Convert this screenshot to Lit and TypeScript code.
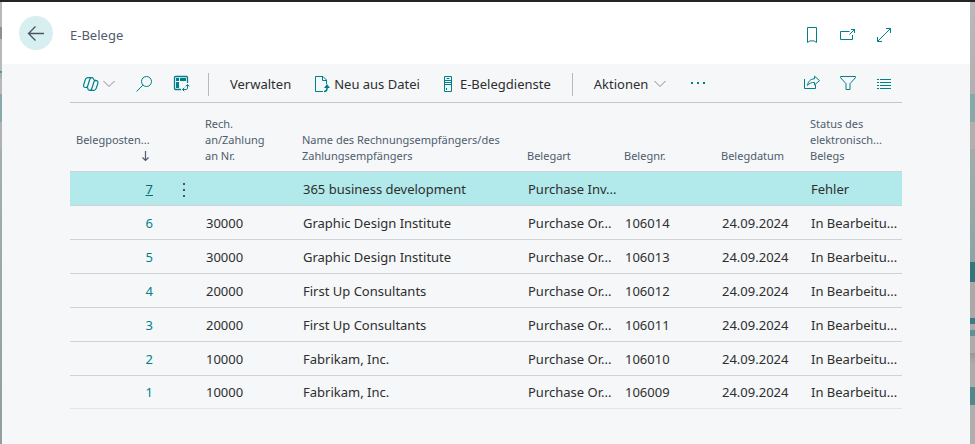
import { LitElement, html, css, svg, nothing } from "lit";
import { customElement, property } from "lit/decorators.js";

interface Entry {
  id: number;
  party: string;
  name: string;
  kind: string;
  docNo: string;
  date: string;
  status: string;
}

const ENTRIES: Entry[] = [
  { id: 7, party: "", name: "365 business development", kind: "Purchase Inv...", docNo: "", date: "", status: "Fehler" },
  { id: 6, party: "30000", name: "Graphic Design Institute", kind: "Purchase Or...", docNo: "106014", date: "24.09.2024", status: "In Bearbeitu..." },
  { id: 5, party: "30000", name: "Graphic Design Institute", kind: "Purchase Or...", docNo: "106013", date: "24.09.2024", status: "In Bearbeitu..." },
  { id: 4, party: "20000", name: "First Up Consultants", kind: "Purchase Or...", docNo: "106012", date: "24.09.2024", status: "In Bearbeitu..." },
  { id: 3, party: "20000", name: "First Up Consultants", kind: "Purchase Or...", docNo: "106011", date: "24.09.2024", status: "In Bearbeitu..." },
  { id: 2, party: "10000", name: "Fabrikam, Inc.", kind: "Purchase Or...", docNo: "106010", date: "24.09.2024", status: "In Bearbeitu..." },
  { id: 1, party: "10000", name: "Fabrikam, Inc.", kind: "Purchase Or...", docNo: "106009", date: "24.09.2024", status: "In Bearbeitu..." },
];

const ICONS = {
  back: { w: 18, h: 17, body: svg`<path d="M17 8.500H1.500M8.500 1.500l-7 7 7 7" stroke-width="1.300"/>` },
  bookmark: { w: 18, h: 18, body: svg`<path d="M4.5 1.5h9v15l-2.5-1.6h-4l-2.5 1.6z"/>` },
  popout: { w: 18, h: 18, body: svg`<path d="M10.5 5.5h-9v8h12V9M10.5 8.5l5-5M12 3.5h3.5V7"/>` },
  expand: { w: 18, h: 18, body: svg`<path d="M2.5 15.5l13-13M11 2.5h4.5V7M2.5 11v4.5H7"/>` },
  copilot: {
    w: 18, h: 16,
    body: svg`<path stroke-width="1.200" d="M5.600 1.600h4.200c1 0 1.500.6 1.800 1.600l.3 1M5.600 1.600C4.300 1.600 3.700 2.500 3.300 3.800L1.800 8.400C1.200 10.400 1.800 11.500 3.600 11.500h1.300M11.900 4.400h1.400c2.100 0 3.100 1.100 2.500 3.100l-1.500 4.600c-.5 1.500-1.100 2.300-2.400 2.300H7.800c-1.100 0-1.600-.6-1.900-1.600l-.4-1.300M9.200 1.800C8.300 2.200 7.900 3 7.500 4.200L5.700 10c-.3 1-.6 1.500-1.600 1.500M8.400 14.200c.9-.4 1.300-1.200 1.700-2.400l1.800-5.800c.3-1 .6-1.600 1.600-1.600"/>`,
  },
  chevron: { w: 12, h: 8, body: svg`<path d="M.5 1L6 6.500 11.500 1"/>` },
  search: { w: 18, h: 18, body: svg`<circle cx="11.500" cy="6.500" r="5"/><path d="M7.900 10.100l-6.400 6.400"/>` },
  analyze: {
    w: 18, h: 18,
    body: svg`<path d="M8 14.500H2.500a1 1 0 0 1-1-1v-11a1 1 0 0 1 1-1h11a1 1 0 0 1 1 1V8" stroke-width="1.300"/><path class="solid" d="M3 3h3v3H3zM7 3h6v3H7zM3 7h3v6H3z"/><path d="M9.500 14.500h3.500c1 0 1.500-.5 1.500-1.500V10M11.300 12.700L9.500 14.500l1.800 1.800M12.700 11.300l1.800-1.800 1.800 1.800"/>`,
  },
  newFile: {
    w: 16, h: 18,
    body: svg`<path d="M8 16.500H.5v-15h7.500l3.500 3.500v4M7.500 1.500V5.500h4"/><path class="solid" d="M12 9l3 4H9z"/><path d="M12 12v1c0 2.200-1 3.500-3 3.500" stroke-width="1.600"/>`,
  },
  server: { w: 8, h: 18, body: svg`<path d="M.5 1.500h7v15h-7zM2.500 3.500h3M1 5.500h6M1 7.500h6M1 9.500h6M2.500 13v2"/>` },
  share: { w: 18, h: 18, body: svg`<path d="M1.500 4v9.500h11V10M4.500 10.500C5 6.500 7.500 3.800 11.500 3.800V1.200l5 4.400-5 4.400V7.400C8.500 7.400 6 8.300 4.500 10.500z"/>` },
  filter: { w: 18, h: 18, body: svg`<path d="M1.500 1.500h15v1.200L11 8.700v5.800H7V8.700l-5.500-6z"/>` },
  list: { w: 18, h: 18, body: svg`<path d="M2 4.500h2M5 4.500h11M2 7.500h2M5 7.500h11M2 10.500h2M5 10.500h11M2 13.500h2M5 13.500h11"/>` },
  more: { w: 16, h: 6, body: svg`<path class="solid" d="M1 1h2v2H1zM7 1h2v2H7zM13 1h2v2h-2z"/>` },
  rowMenu: { w: 4, h: 16, body: svg`<path class="solid" d="M1 1h2v2H1zM1 7h2v2H1zM1 13h2v2H1z"/>` },
  sortDown: { w: 8, h: 12, body: svg`<path d="M3.500 1v9.500M.5 7.500l3 3 3-3" stroke-width="1.200"/>` },
};

@customElement("ui-icon")
export class UiIcon extends LitElement {
  @property() name: keyof typeof ICONS = "back";

  static styles = css`
    :host { display: inline-flex; flex: none; }
    .icon { display: block; fill: none; stroke: currentColor; stroke-width: 1; }
    .solid { fill: currentColor; stroke: none; }
  `;

  render() {
    const i = ICONS[this.name];
    return html`<svg class="icon" width=${i.w} height=${i.h} viewBox="0 0 ${i.w} ${i.h}" aria-hidden="true">${i.body}</svg>`;
  }
}

@customElement("app-root")
export class AppRoot extends LitElement {
  static styles = css`
    :host {
      display: grid;
      grid-template-columns: 2px minmax(0, 1fr) 5px;
      min-height: 100vh;
      box-sizing: border-box;
      border-top: 2px solid #252423;
      background: #f5f7f9;
      color: #2e2e2e;
      font-family: "Noto Sans", "Open Sans", sans-serif;
      font-size: 13px;
      line-height: 18px;
    }
    .behind-left {
      background: linear-gradient(#b8b8b8 25px, #8b9097 25px 37px, #b9b9b9 37px 69px, #5f9499 69px 71px,
        #a3b3b3 71px 76px, #b9b9b9 76px 92px, #88a9ac 92px 120px, #b0b2b2 120px 147px, #a3b0ae 147px, #929e9e);
    }
    .behind-right {
      background: linear-gradient(#bababa, #b0b0b0 92px, #86a9ab 92px 120px, #b1b0af 120px 147px,
        #a0aeab 147px, #88a5a4 260px, #30777d 260px 280px, #a9a9a9 280px 316px, #367e84 316px 322px,
        #acacac 322px 328px, #5f9296 328px 334px, #acacac 334px 351px, #989898 351px, #acacac 362px 385px,
        #50898b 385px 403px, #aeaeae 403px);
    }
    button {
      display: inline-flex;
      align-items: center;
      margin: 0;
      padding: 0;
      border: 0;
      background: none;
      color: inherit;
      font: inherit;
      text-align: left;
      cursor: pointer;
    }
    .head {
      display: flex;
      align-items: center;
      height: 62px;
      padding: 0 77px 0 17px;
      background: #fff;
    }
    .back {
      justify-content: center;
      width: 34px;
      height: 34px;
      border-radius: 50%;
      background: #d7eff1;
      color: #4c535c;
    }
    .title {
      flex: 1;
      margin: 0;
      padding: 4px 0 0 17px;
      color: #505c6d;
      font-size: 13px;
      font-weight: 400;
    }
    .group { display: flex; align-items: center; gap: 18px; color: #008089; }
    .head .group { padding-top: 4px; }
    .body { padding: 0 68px 24px; }
    .toolbar {
      display: flex;
      align-items: center;
      height: 39px;
      padding: 2px 9px 0 12px;
      box-sizing: border-box;
      border-bottom: 1px solid #c4c6c9;
    }
    .teal { color: #008089; }
    .grey { color: #848b95; }
    .labelled { gap: 3px; white-space: nowrap; }
    .server { gap: 8px; }
    .rule { width: 1px; height: 23px; background: #b5bac2; }
    .views { display: flex; gap: 20px; padding-right: 17px; }
    .commands { display: flex; align-items: center; gap: 24px; padding: 0 21px; }
    .actions { display: flex; align-items: center; gap: 24px; padding-left: 21px; flex: 1; }
    .actions .labelled { gap: 6px; }

    table { width: 100%; border-collapse: separate; border-spacing: 0; table-layout: fixed; }
    .c-id { width: 98px; }
    .c-menu { width: 31px; }
    .c-party { width: 97px; }
    .c-kind, .c-no { width: 97px; }
    .c-date { width: 89px; }
    .c-status { width: 98px; }
    th {
      height: 69px;
      box-sizing: border-box;
      padding: 0 0 7px 6px;
      border-bottom: 1px solid #d0d3d6;
      color: #505c6d;
      font-size: 11px;
      font-weight: 400;
      line-height: 16px;
      text-align: left;
      vertical-align: bottom;
      white-space: nowrap;
    }
    th button { white-space: pre; }
    .sorted { flex-direction: column; align-items: flex-end; }
    .sorted ui-icon { height: 16px; align-items: center; }
    td {
      height: 34px;
      box-sizing: border-box;
      padding: 0 0 0 7px;
      border-bottom: 1px solid #d0d3d6;
      white-space: nowrap;
    }
    tbody tr:last-child td { height: 33px; border-bottom-color: #e2e4e6; }
    .id { padding-right: 15px; text-align: right; }
    .id a { color: #008089; text-decoration: none; }
    .menu { padding: 0; text-align: center; }
    .menu button { vertical-align: middle; color: #45565a; }
    .selected td { background: #b2e9eb; }
    .selected .id a { color: #006d75; text-decoration: underline; }
  `;

  private row(e: Entry, selected: boolean) {
    return html`<tr class=${selected ? "selected" : ""}>
      <td class="id"><a href="#${e.id}">${e.id}</a></td>
      <td class="menu">${selected
        ? html`<button aria-label="Weitere Optionen"><ui-icon name="rowMenu"></ui-icon></button>`
        : nothing}</td>
      <td>${e.party}</td>
      <td>${e.name}</td>
      <td>${e.kind}</td>
      <td>${e.docNo}</td>
      <td>${e.date}</td>
      <td>${e.status}</td>
    </tr>`;
  }

  render() {
    return html`
      <div class="behind-left"></div>
      <main>
        <header class="head">
          <button class="back" aria-label="Zurück"><ui-icon name="back"></ui-icon></button>
          <h1 class="title">E-Belege</h1>
          <div class="group">
            <button aria-label="Lesezeichen"><ui-icon name="bookmark"></ui-icon></button>
            <button aria-label="In neuem Fenster öffnen"><ui-icon name="popout"></ui-icon></button>
            <button aria-label="Vergrößern"><ui-icon name="expand"></ui-icon></button>
          </div>
        </header>
        <div class="body">
          <div class="toolbar" role="toolbar">
            <div class="views">
              <button class="labelled" aria-label="Copilot">
                <ui-icon class="teal" name="copilot"></ui-icon><ui-icon class="grey" name="chevron"></ui-icon>
              </button>
              <button class="teal" aria-label="Suchen"><ui-icon name="search"></ui-icon></button>
              <button class="teal" aria-label="Analysieren"><ui-icon name="analyze"></ui-icon></button>
            </div>
            <span class="rule"></span>
            <div class="commands">
              <button class="labelled">Verwalten</button>
              <button class="labelled"><ui-icon class="teal" name="newFile"></ui-icon>Neu aus Datei</button>
              <button class="labelled server"><ui-icon class="teal" name="server"></ui-icon>E-Belegdienste</button>
            </div>
            <span class="rule"></span>
            <div class="actions">
              <button class="labelled">Aktionen<ui-icon class="grey" name="chevron"></ui-icon></button>
              <button class="teal" aria-label="Mehr"><ui-icon name="more"></ui-icon></button>
            </div>
            <div class="group">
              <button aria-label="Teilen"><ui-icon name="share"></ui-icon></button>
              <button aria-label="Filter"><ui-icon name="filter"></ui-icon></button>
              <button aria-label="Liste"><ui-icon name="list"></ui-icon></button>
            </div>
          </div>
          <table>
            <colgroup>
              <col class="c-id" /><col class="c-menu" /><col class="c-party" /><col />
              <col class="c-kind" /><col class="c-no" /><col class="c-date" /><col class="c-status" />
            </colgroup>
            <thead>
              <tr>
                <th aria-sort="descending"><button class="sorted">Belegposten...<ui-icon name="sortDown"></ui-icon></button></th>
                <th></th>
                <th><button>${"Rech.\nan/Zahlung\nan Nr."}</button></th>
                <th><button>${"Name des Rechnungsempfängers/des\nZahlungsempfängers"}</button></th>
                <th><button>Belegart</button></th>
                <th><button>Belegnr.</button></th>
                <th><button>Belegdatum</button></th>
                <th><button>${"Status des\nelektronisch...\nBelegs"}</button></th>
              </tr>
            </thead>
            <tbody>${ENTRIES.map((e, i) => this.row(e, i === 0))}</tbody>
          </table>
        </div>
      </main>
      <div class="behind-right"></div>
    `;
  }
}
